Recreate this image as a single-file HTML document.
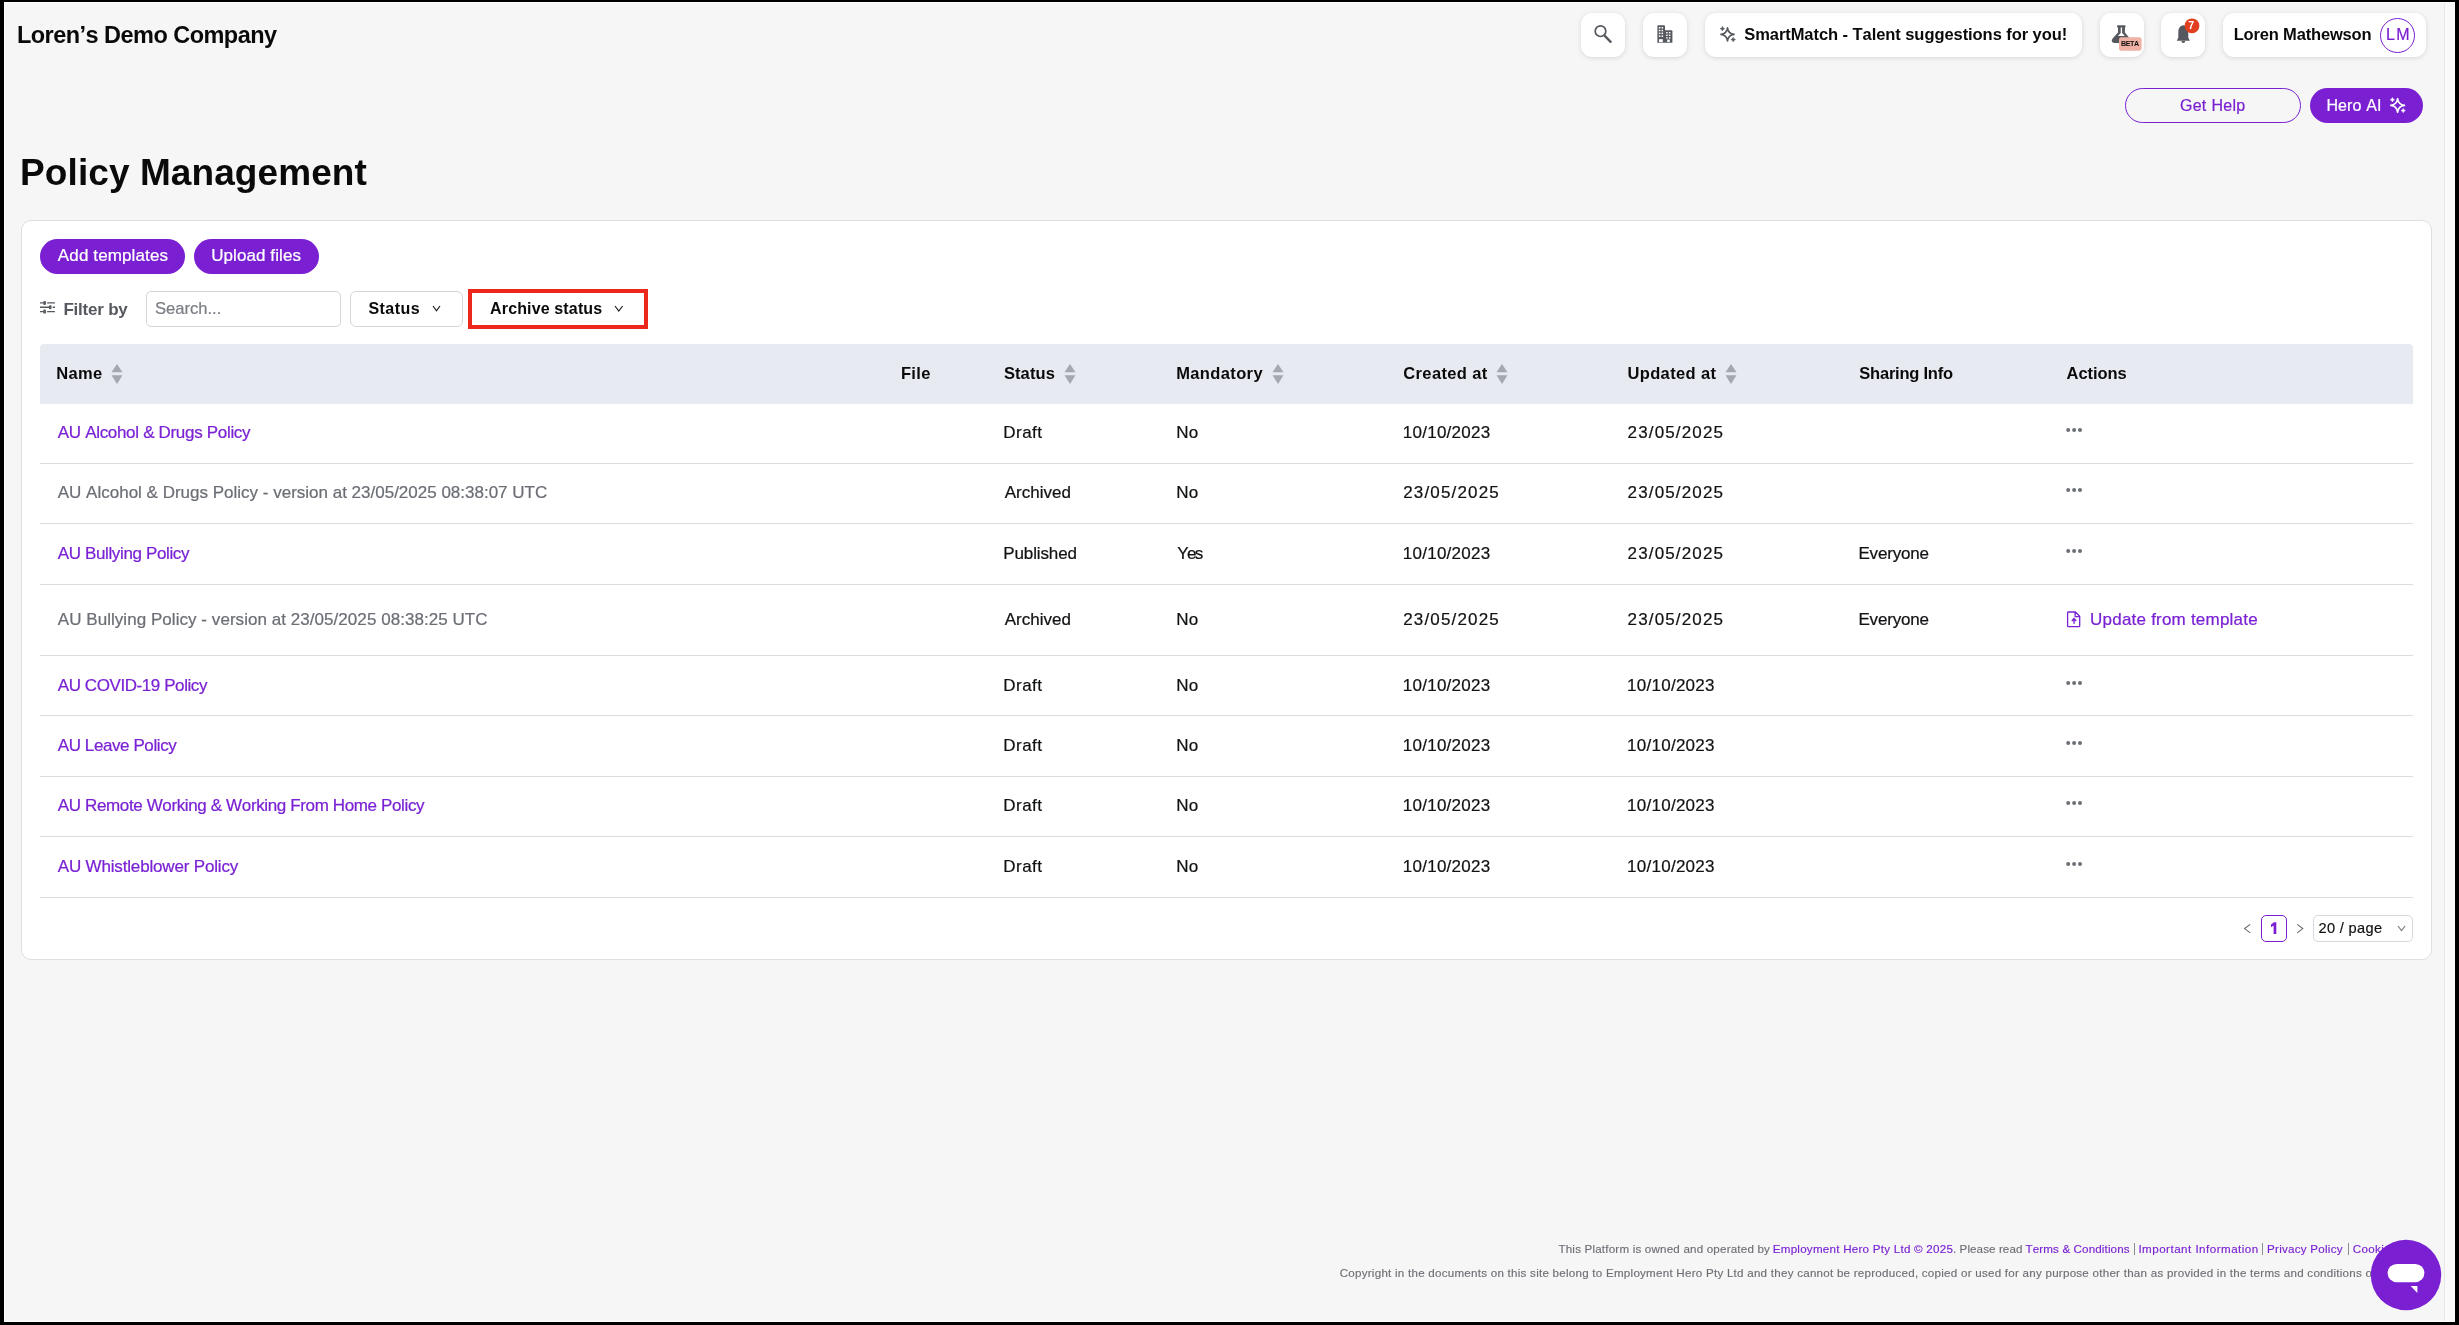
<!DOCTYPE html>
<html><head><meta charset="utf-8"><title>Policy Management</title>
<style>
html,body{margin:0;padding:0;width:2459px;height:1325px;overflow:hidden;background:#f5f5f5}
body{position:relative;font-family:"Liberation Sans",sans-serif}
.t{position:absolute;white-space:nowrap;font-kerning:none}
#root{position:absolute;left:0;top:0;width:2459px;height:1325px;will-change:transform;overflow:hidden}
.ft{position:absolute;white-space:nowrap;font-size:11.6px;line-height:14px;font-kerning:none}
svg{overflow:visible}
</style></head><body><div id="root">
<div style="position:absolute;left:0px;top:0px;width:2459px;height:1325px;background:#000"></div>
<div style="position:absolute;left:4px;top:2px;width:2451px;height:1320px;background:#fff"></div>
<div style="position:absolute;left:5px;top:3px;width:2449px;height:1318px;background:#f6f6f6"></div>
<div style="position:absolute;left:2444px;top:3px;width:10px;height:1318px;background:#fafafa;border-left:1px solid #e8e8e8;box-sizing:border-box"></div>
<span class="t" style="left:16.93px;top:21px;font-size:23.5px;line-height:29px;font-weight:700;color:#0a0a0a;letter-spacing:-0.531px;">Loren’s Demo Company</span>
<div style="position:absolute;left:1581px;top:13px;width:44px;height:44px;background:#fff;border-radius:11px;box-shadow:0 1px 5px rgba(0,0,0,0.13)"></div>
<div style="position:absolute;left:1643px;top:13px;width:44px;height:44px;background:#fff;border-radius:11px;box-shadow:0 1px 5px rgba(0,0,0,0.13)"></div>
<div style="position:absolute;left:1705px;top:13px;width:377px;height:44px;background:#fff;border-radius:11px;box-shadow:0 1px 5px rgba(0,0,0,0.13)"></div>
<div style="position:absolute;left:2100px;top:13px;width:44px;height:44px;background:#fff;border-radius:11px;box-shadow:0 1px 5px rgba(0,0,0,0.13)"></div>
<div style="position:absolute;left:2161px;top:13px;width:44px;height:44px;background:#fff;border-radius:11px;box-shadow:0 1px 5px rgba(0,0,0,0.13)"></div>
<div style="position:absolute;left:2223px;top:13px;width:203px;height:44px;background:#fff;border-radius:11px;box-shadow:0 1px 5px rgba(0,0,0,0.13)"></div>
<svg style="position:absolute;left:1590px;top:20px" width="26" height="28" viewBox="1590 20 26 28"><circle cx="1600.5" cy="31.2" r="5.3" fill="none" stroke="#55585e" stroke-width="1.7"/><line x1="1605" y1="36.2" x2="1610.6" y2="41.8" stroke="#55585e" stroke-width="2.4" stroke-linecap="round"/></svg>
<svg style="position:absolute;left:1650px;top:20px" width="30" height="30" viewBox="1650 20 30 30"><path d="M1657.4 26.3 q0-1 1-1 h5.6 q1 0 1 1 V42.8 h-7.6 Z" fill="#55585e"/><path d="M1665 30.2 h6.4 q1 0 1 1 V42.8 H1665 Z" fill="#55585e"/><rect x="1658.8" y="27" width="1.6" height="1.5" fill="#fff"/><rect x="1658.8" y="29.8" width="1.6" height="1.5" fill="#fff"/><rect x="1658.8" y="32.6" width="1.6" height="1.5" fill="#fff"/><rect x="1658.8" y="35.4" width="1.6" height="1.5" fill="#fff"/><rect x="1661.5" y="27" width="1.6" height="1.5" fill="#fff"/><rect x="1661.5" y="29.8" width="1.6" height="1.5" fill="#fff"/><rect x="1661.5" y="32.6" width="1.6" height="1.5" fill="#fff"/><rect x="1661.5" y="35.4" width="1.6" height="1.5" fill="#fff"/><rect x="1666.2" y="32" width="1.5" height="1.4" fill="#fff"/><rect x="1666.2" y="34.6" width="1.5" height="1.4" fill="#fff"/><rect x="1666.2" y="37.2" width="1.5" height="1.4" fill="#fff"/><rect x="1668.9" y="32" width="1.5" height="1.4" fill="#fff"/><rect x="1668.9" y="34.6" width="1.5" height="1.4" fill="#fff"/><rect x="1668.9" y="37.2" width="1.5" height="1.4" fill="#fff"/><rect x="1659" y="39.2" width="3.8" height="3" fill="#fff"/><rect x="1667.2" y="39.6" width="2.6" height="2.4" fill="#fff"/></svg>
<svg style="position:absolute;left:1715px;top:22px" width="26" height="24" viewBox="1715 22 26 24"><path d="M1727.5 27.799999999999997 Q1728.2 33.699999999999996 1734.1 34.4 Q1728.2 35.1 1727.5 41.0 Q1726.8 35.1 1720.9 34.4 Q1726.8 33.699999999999996 1727.5 27.799999999999997 Z" fill="none" stroke="#55585e" stroke-width="1.6" stroke-linejoin="round"/><path d="M1722.4 26.4 Q1722.8500000000001 28.25 1724.7 28.7 Q1722.8500000000001 29.15 1722.4 31.0 Q1721.95 29.15 1720.1000000000001 28.7 Q1721.95 28.25 1722.4 26.4 Z" fill="#55585e" stroke="#55585e" stroke-width="0.5"/><path d="M1733.2 37.300000000000004 Q1733.65 39.15 1735.5 39.6 Q1733.65 40.050000000000004 1733.2 41.9 Q1732.75 40.050000000000004 1730.9 39.6 Q1732.75 39.15 1733.2 37.300000000000004 Z" fill="#55585e" stroke="#55585e" stroke-width="0.5"/></svg>
<span class="t" style="left:1744.22px;top:24px;font-size:16.5px;line-height:21px;font-weight:700;color:#0a0a0a;letter-spacing:-0.062px;">SmartMatch - Talent suggestions for you!</span>
<svg style="position:absolute;left:2108px;top:20px" width="40" height="34" viewBox="2108 20 40 34"><rect x="2117" y="25.3" width="8.6" height="2.1" rx="0.9" fill="#55585e"/><path fill-rule="evenodd" fill="#55585e" d="M2118 27 V32.6 L2112.6 38.6 Q2111.2 40.3 2112 41.8 Q2112.6 42.9 2114.2 42.9 H2128.6 Q2130.4 42.9 2130.8 41.6 Q2131.2 40.2 2130 38.8 L2124.9 32.6 V27 Z M2120.7 27 V32.9 L2117.9 36.1 H2124.9 L2122.1 32.9 V27 Z"/><rect x="2119" y="37.2" width="22.6" height="13.6" rx="2.2" fill="#f0b2a4"/></svg>
<span class="t" style="left:2121.02px;top:39px;font-size:7.2px;line-height:9px;font-weight:700;color:#111;letter-spacing:-0.476px;">BETA</span>
<svg style="position:absolute;left:2170px;top:15px" width="32" height="32" viewBox="2170 15 32 32"><path d="M2183.3 25.2 C2180.2 25.6 2178.3 28.4 2178.3 31.8 V37.4 L2176.8 40.8 H2189.8 L2188.3 37.4 V31.8 C2188.3 28.4 2186.4 25.6 2183.3 25.2 Z" fill="#55585e"/><path d="M2181.4 41 a1.9 1.9 0 0 0 3.8 0 Z" fill="#55585e"/><circle cx="2192" cy="25.8" r="7.4" fill="#e0401f"/></svg>
<span class="t" style="left:2188.14px;top:19px;font-size:10.6px;line-height:13px;font-weight:700;color:#fff;letter-spacing:0.000px;">7</span>
<span class="t" style="left:2233.70px;top:24px;font-size:16.5px;line-height:21px;font-weight:700;color:#0a0a0a;letter-spacing:-0.167px;">Loren Mathewson</span>
<div style="position:absolute;left:2380px;top:18px;width:35px;height:35px;border:1.4px solid #7a20d2;border-radius:50%;box-sizing:border-box"></div>
<span class="t" style="left:2385.99px;top:25px;font-size:16px;line-height:20px;font-weight:400;color:#7a20d2;letter-spacing:1.298px;-webkit-text-stroke:0.208px #7a20d2;">LM</span>
<div style="position:absolute;left:2125px;top:88px;width:176px;height:35px;border:1.5px solid #7a20d2;border-radius:18px;box-sizing:border-box"></div>
<span class="t" style="left:2179.90px;top:96px;font-size:16px;line-height:20px;font-weight:400;color:#7a20d2;letter-spacing:0.319px;-webkit-text-stroke:0.208px #7a20d2;">Get Help</span>
<div style="position:absolute;left:2310px;top:88px;width:113px;height:35px;background:#7a20d2;border-radius:18px"></div>
<span class="t" style="left:2326.39px;top:96px;font-size:16px;line-height:20px;font-weight:400;color:#fff;letter-spacing:0.141px;-webkit-text-stroke:0.208px #fff;">Hero AI</span>
<svg style="position:absolute;left:2386px;top:94px" width="24" height="24" viewBox="2386 94 24 24"><path d="M2397.6 98.5 Q2398.2999999999997 104.7 2404.5 105.4 Q2398.2999999999997 106.10000000000001 2397.6 112.30000000000001 Q2396.9 106.10000000000001 2390.7 105.4 Q2396.9 104.7 2397.6 98.5 Z" fill="none" stroke="#fff" stroke-width="1.6" stroke-linejoin="round"/><path d="M2392.4 97.6 Q2392.85 99.35 2394.6 99.8 Q2392.85 100.25 2392.4 102.0 Q2391.9500000000003 100.25 2390.2000000000003 99.8 Q2391.9500000000003 99.35 2392.4 97.6 Z" fill="#fff" stroke="#fff" stroke-width="0.5"/><path d="M2403.2 108.39999999999999 Q2403.6499999999996 110.14999999999999 2405.3999999999996 110.6 Q2403.6499999999996 111.05 2403.2 112.8 Q2402.75 111.05 2401.0 110.6 Q2402.75 110.14999999999999 2403.2 108.39999999999999 Z" fill="#fff" stroke="#fff" stroke-width="0.5"/></svg>
<span class="t" style="left:20.12px;top:150px;font-size:37px;line-height:46px;font-weight:700;color:#0a0a0a;letter-spacing:0.081px;">Policy Management</span>
<div style="position:absolute;left:21px;top:220px;width:2411px;height:740px;background:#fff;border:1px solid #dcdfe4;border-radius:10px;box-sizing:border-box"></div>
<div style="position:absolute;left:40px;top:239px;width:145px;height:35px;background:#7a20d2;border-radius:18px"></div>
<span class="t" style="left:57.87px;top:245px;font-size:17px;line-height:21px;font-weight:400;color:#fff;letter-spacing:0.123px;-webkit-text-stroke:0.221px #fff;">Add templates</span>
<div style="position:absolute;left:194px;top:239px;width:125px;height:35px;background:#7a20d2;border-radius:18px"></div>
<span class="t" style="left:211.19px;top:245px;font-size:17px;line-height:21px;font-weight:400;color:#fff;letter-spacing:0.082px;-webkit-text-stroke:0.221px #fff;">Upload files</span>
<svg style="position:absolute;left:38px;top:298px" width="20" height="18" viewBox="38 298 20 18"><path d="M40 302.9 H43.6 M47.1 302.9 H54.9" stroke="#55585e" stroke-width="1.4"/><rect x="43.25" y="300.9" width="2.7" height="4" rx="1.2" fill="#55585e"/><path d="M40 307.3 H49.2 M52.7 307.3 H54.9" stroke="#55585e" stroke-width="1.4"/><rect x="48.85" y="305.3" width="2.7" height="4" rx="1.2" fill="#55585e"/><path d="M40 311.6 H43.6 M47.1 311.6 H54.9" stroke="#55585e" stroke-width="1.4"/><rect x="43.25" y="309.6" width="2.7" height="4" rx="1.2" fill="#55585e"/></svg>
<span class="t" style="left:63.46px;top:299px;font-size:17px;line-height:21px;font-weight:700;color:#55585e;letter-spacing:-0.224px;">Filter by</span>
<div style="position:absolute;left:146px;top:291px;width:195px;height:36px;background:#fff;border:1px solid #d6d6d6;border-radius:5px;box-sizing:border-box"></div>
<span class="t" style="left:155.05px;top:298px;font-size:16.6px;line-height:21px;font-weight:400;color:#7b7e85;letter-spacing:-0.020px;-webkit-text-stroke:0.216px #7b7e85;">Search...</span>
<div style="position:absolute;left:350px;top:291px;width:113px;height:36px;background:#fff;border:1px solid #d6d6d6;border-radius:6px;box-sizing:border-box"></div>
<span class="t" style="left:368.44px;top:299px;font-size:16px;line-height:20px;font-weight:700;color:#0a0a0a;letter-spacing:0.464px;">Status</span>
<svg style="position:absolute;left:430.6px;top:303.9px" width="11.0" height="8.800000000000011" viewBox="430.6 303.9 11.0 8.800000000000011"><path d="M432.6 305.9 L436.1 310.7 L439.6 305.9" fill="none" stroke="#1a1a1a" stroke-width="1.15"/></svg>
<div style="position:absolute;left:472px;top:293px;width:172px;height:32px;background:#fff;border-radius:5px"></div>
<span class="t" style="left:490.10px;top:299px;font-size:16px;line-height:20px;font-weight:700;color:#0a0a0a;letter-spacing:0.138px;">Archive status</span>
<svg style="position:absolute;left:612.8px;top:303.9px" width="11.600000000000023" height="9.100000000000023" viewBox="612.8 303.9 11.600000000000023 9.100000000000023"><path d="M614.8 305.9 L618.5999999999999 311.0 L622.4 305.9" fill="none" stroke="#1a1a1a" stroke-width="1.15"/></svg>
<div style="position:absolute;left:468px;top:289px;width:180px;height:40px;border:4px solid #ec281c;box-sizing:border-box"></div>
<div style="position:absolute;left:40px;top:344px;width:2373px;height:60px;background:#e7eaf1;border-radius:4px 4px 0 0"></div>
<span class="t" style="left:56.30px;top:363px;font-size:16.5px;line-height:21px;font-weight:700;color:#0a0a0a;letter-spacing:0.276px;">Name</span>
<svg style="position:absolute;left:111px;top:363px" width="12" height="22" viewBox="0 0 12 22"><path d="M6 1 L11.5 9.2 H0.5 Z" fill="#a4a7ae"/><path d="M6 21 L11.5 12.3 H0.5 Z" fill="#a4a7ae"/></svg>
<span class="t" style="left:900.90px;top:363px;font-size:16.5px;line-height:21px;font-weight:700;color:#0a0a0a;letter-spacing:0.348px;">File</span>
<span class="t" style="left:1003.92px;top:363px;font-size:16.5px;line-height:21px;font-weight:700;color:#0a0a0a;letter-spacing:0.105px;">Status</span>
<svg style="position:absolute;left:1064px;top:363px" width="12" height="22" viewBox="0 0 12 22"><path d="M6 1 L11.5 9.2 H0.5 Z" fill="#a4a7ae"/><path d="M6 21 L11.5 12.3 H0.5 Z" fill="#a4a7ae"/></svg>
<span class="t" style="left:1176.20px;top:363px;font-size:16.5px;line-height:21px;font-weight:700;color:#0a0a0a;letter-spacing:0.371px;">Mandatory</span>
<svg style="position:absolute;left:1272px;top:363px" width="12" height="22" viewBox="0 0 12 22"><path d="M6 1 L11.5 9.2 H0.5 Z" fill="#a4a7ae"/><path d="M6 21 L11.5 12.3 H0.5 Z" fill="#a4a7ae"/></svg>
<span class="t" style="left:1403.32px;top:363px;font-size:16.5px;line-height:21px;font-weight:700;color:#0a0a0a;letter-spacing:0.354px;">Created at</span>
<svg style="position:absolute;left:1496px;top:363px" width="12" height="22" viewBox="0 0 12 22"><path d="M6 1 L11.5 9.2 H0.5 Z" fill="#a4a7ae"/><path d="M6 21 L11.5 12.3 H0.5 Z" fill="#a4a7ae"/></svg>
<span class="t" style="left:1627.51px;top:363px;font-size:16.5px;line-height:21px;font-weight:700;color:#0a0a0a;letter-spacing:0.349px;">Updated at</span>
<svg style="position:absolute;left:1725px;top:363px" width="12" height="22" viewBox="0 0 12 22"><path d="M6 1 L11.5 9.2 H0.5 Z" fill="#a4a7ae"/><path d="M6 21 L11.5 12.3 H0.5 Z" fill="#a4a7ae"/></svg>
<span class="t" style="left:1859.32px;top:363px;font-size:16.5px;line-height:21px;font-weight:700;color:#0a0a0a;letter-spacing:-0.230px;">Sharing Info</span>
<span class="t" style="left:2066.59px;top:363px;font-size:16.5px;line-height:21px;font-weight:700;color:#0a0a0a;letter-spacing:-0.070px;">Actions</span>
<div style="position:absolute;left:40px;top:463px;width:2373px;height:1px;background:#dbdce0"></div>
<div style="position:absolute;left:40px;top:523px;width:2373px;height:1px;background:#dbdce0"></div>
<div style="position:absolute;left:40px;top:584px;width:2373px;height:1px;background:#dbdce0"></div>
<div style="position:absolute;left:40px;top:655px;width:2373px;height:1px;background:#dbdce0"></div>
<div style="position:absolute;left:40px;top:715px;width:2373px;height:1px;background:#dbdce0"></div>
<div style="position:absolute;left:40px;top:776px;width:2373px;height:1px;background:#dbdce0"></div>
<div style="position:absolute;left:40px;top:836px;width:2373px;height:1px;background:#dbdce0"></div>
<div style="position:absolute;left:40px;top:897px;width:2373px;height:1px;background:#dbdce0"></div>
<span class="t" style="left:57.77px;top:422px;font-size:17px;line-height:21px;font-weight:400;color:#7a22d4;letter-spacing:-0.314px;-webkit-text-stroke:0.221px #7a22d4;">AU Alcohol &amp; Drugs Policy</span>
<span class="t" style="left:1003.31px;top:422px;font-size:17px;line-height:21px;font-weight:400;color:#111214;letter-spacing:0.470px;-webkit-text-stroke:0.221px #111214;">Draft</span>
<span class="t" style="left:1176.31px;top:422px;font-size:17px;line-height:21px;font-weight:400;color:#111214;letter-spacing:0.177px;-webkit-text-stroke:0.221px #111214;">No</span>
<span class="t" style="left:1402.81px;top:422px;font-size:17px;line-height:21px;font-weight:400;color:#111214;letter-spacing:0.251px;-webkit-text-stroke:0.221px #111214;">10/10/2023</span>
<span class="t" style="left:1627.55px;top:422px;font-size:17px;line-height:21px;font-weight:400;color:#111214;letter-spacing:1.154px;-webkit-text-stroke:0.221px #111214;">23/05/2025</span>
<svg style="position:absolute;left:2064px;top:426px" width="22" height="8" viewBox="2064 426 22 8"><circle cx="2068.2" cy="430" r="2" fill="#6c6f75"/><circle cx="2074.1" cy="430" r="2" fill="#6c6f75"/><circle cx="2080" cy="430" r="2" fill="#6c6f75"/></svg>
<span class="t" style="left:57.77px;top:482px;font-size:17px;line-height:21px;font-weight:400;color:#6b6e75;letter-spacing:0.000px;-webkit-text-stroke:0.221px #6b6e75;">AU Alcohol &amp; Drugs Policy - version at 23/05/2025 08:38:07 UTC</span>
<span class="t" style="left:1004.67px;top:482px;font-size:17px;line-height:21px;font-weight:400;color:#111214;letter-spacing:0.027px;-webkit-text-stroke:0.221px #111214;">Archived</span>
<span class="t" style="left:1176.31px;top:482px;font-size:17px;line-height:21px;font-weight:400;color:#111214;letter-spacing:0.177px;-webkit-text-stroke:0.221px #111214;">No</span>
<span class="t" style="left:1403.25px;top:482px;font-size:17px;line-height:21px;font-weight:400;color:#111214;letter-spacing:1.154px;-webkit-text-stroke:0.221px #111214;">23/05/2025</span>
<span class="t" style="left:1627.55px;top:482px;font-size:17px;line-height:21px;font-weight:400;color:#111214;letter-spacing:1.154px;-webkit-text-stroke:0.221px #111214;">23/05/2025</span>
<svg style="position:absolute;left:2064px;top:486px" width="22" height="8" viewBox="2064 486 22 8"><circle cx="2068.2" cy="490" r="2" fill="#6c6f75"/><circle cx="2074.1" cy="490" r="2" fill="#6c6f75"/><circle cx="2080" cy="490" r="2" fill="#6c6f75"/></svg>
<span class="t" style="left:57.77px;top:543px;font-size:17px;line-height:21px;font-weight:400;color:#7a22d4;letter-spacing:-0.369px;-webkit-text-stroke:0.221px #7a22d4;">AU Bullying Policy</span>
<span class="t" style="left:1003.31px;top:543px;font-size:17px;line-height:21px;font-weight:400;color:#111214;letter-spacing:-0.122px;-webkit-text-stroke:0.221px #111214;">Published</span>
<span class="t" style="left:1177.33px;top:543px;font-size:17px;line-height:21px;font-weight:400;color:#111214;letter-spacing:-1.703px;-webkit-text-stroke:0.221px #111214;">Yes</span>
<span class="t" style="left:1402.81px;top:543px;font-size:17px;line-height:21px;font-weight:400;color:#111214;letter-spacing:0.251px;-webkit-text-stroke:0.221px #111214;">10/10/2023</span>
<span class="t" style="left:1627.55px;top:543px;font-size:17px;line-height:21px;font-weight:400;color:#111214;letter-spacing:1.154px;-webkit-text-stroke:0.221px #111214;">23/05/2025</span>
<span class="t" style="left:1858.41px;top:543px;font-size:17px;line-height:21px;font-weight:400;color:#111214;letter-spacing:-0.181px;-webkit-text-stroke:0.221px #111214;">Everyone</span>
<svg style="position:absolute;left:2064px;top:547px" width="22" height="8" viewBox="2064 547 22 8"><circle cx="2068.2" cy="551" r="2" fill="#6c6f75"/><circle cx="2074.1" cy="551" r="2" fill="#6c6f75"/><circle cx="2080" cy="551" r="2" fill="#6c6f75"/></svg>
<span class="t" style="left:57.77px;top:609px;font-size:17px;line-height:21px;font-weight:400;color:#6b6e75;letter-spacing:0.049px;-webkit-text-stroke:0.221px #6b6e75;">AU Bullying Policy - version at 23/05/2025 08:38:25 UTC</span>
<span class="t" style="left:1004.67px;top:609px;font-size:17px;line-height:21px;font-weight:400;color:#111214;letter-spacing:0.027px;-webkit-text-stroke:0.221px #111214;">Archived</span>
<span class="t" style="left:1176.31px;top:609px;font-size:17px;line-height:21px;font-weight:400;color:#111214;letter-spacing:0.177px;-webkit-text-stroke:0.221px #111214;">No</span>
<span class="t" style="left:1403.25px;top:609px;font-size:17px;line-height:21px;font-weight:400;color:#111214;letter-spacing:1.154px;-webkit-text-stroke:0.221px #111214;">23/05/2025</span>
<span class="t" style="left:1627.55px;top:609px;font-size:17px;line-height:21px;font-weight:400;color:#111214;letter-spacing:1.154px;-webkit-text-stroke:0.221px #111214;">23/05/2025</span>
<span class="t" style="left:1858.41px;top:609px;font-size:17px;line-height:21px;font-weight:400;color:#111214;letter-spacing:-0.181px;-webkit-text-stroke:0.221px #111214;">Everyone</span>
<svg style="position:absolute;left:2066px;top:610px" width="16" height="18" viewBox="2066 610 16 18"><path d="M2068.4 612 h7 l4.3 4.3 v9.6 q0 0.8 -0.8 0.8 h-10.5 q-0.8 0 -0.8 -0.8 v-13.1 q0 -0.8 0.8 -0.8 Z M2075.1 612.2 v4.4 h4.4" fill="none" stroke="#7a22d4" stroke-width="1.3" stroke-linejoin="round"/><path d="M2074 623.8 v-5 M2071.8 620.9 l2.2 -2.3 l2.2 2.3" fill="none" stroke="#7a22d4" stroke-width="1.4"/></svg>
<span class="t" style="left:2090.09px;top:609px;font-size:17px;line-height:21px;font-weight:400;color:#7a22d4;letter-spacing:0.216px;-webkit-text-stroke:0.221px #7a22d4;">Update from template</span>
<span class="t" style="left:57.77px;top:675px;font-size:17px;line-height:21px;font-weight:400;color:#7a22d4;letter-spacing:-0.421px;-webkit-text-stroke:0.221px #7a22d4;">AU COVID-19 Policy</span>
<span class="t" style="left:1003.31px;top:675px;font-size:17px;line-height:21px;font-weight:400;color:#111214;letter-spacing:0.470px;-webkit-text-stroke:0.221px #111214;">Draft</span>
<span class="t" style="left:1176.31px;top:675px;font-size:17px;line-height:21px;font-weight:400;color:#111214;letter-spacing:0.177px;-webkit-text-stroke:0.221px #111214;">No</span>
<span class="t" style="left:1402.81px;top:675px;font-size:17px;line-height:21px;font-weight:400;color:#111214;letter-spacing:0.251px;-webkit-text-stroke:0.221px #111214;">10/10/2023</span>
<span class="t" style="left:1627.11px;top:675px;font-size:17px;line-height:21px;font-weight:400;color:#111214;letter-spacing:0.251px;-webkit-text-stroke:0.221px #111214;">10/10/2023</span>
<svg style="position:absolute;left:2064px;top:679px" width="22" height="8" viewBox="2064 679 22 8"><circle cx="2068.2" cy="683" r="2" fill="#6c6f75"/><circle cx="2074.1" cy="683" r="2" fill="#6c6f75"/><circle cx="2080" cy="683" r="2" fill="#6c6f75"/></svg>
<span class="t" style="left:57.77px;top:735px;font-size:17px;line-height:21px;font-weight:400;color:#7a22d4;letter-spacing:-0.412px;-webkit-text-stroke:0.221px #7a22d4;">AU Leave Policy</span>
<span class="t" style="left:1003.31px;top:735px;font-size:17px;line-height:21px;font-weight:400;color:#111214;letter-spacing:0.470px;-webkit-text-stroke:0.221px #111214;">Draft</span>
<span class="t" style="left:1176.31px;top:735px;font-size:17px;line-height:21px;font-weight:400;color:#111214;letter-spacing:0.177px;-webkit-text-stroke:0.221px #111214;">No</span>
<span class="t" style="left:1402.81px;top:735px;font-size:17px;line-height:21px;font-weight:400;color:#111214;letter-spacing:0.251px;-webkit-text-stroke:0.221px #111214;">10/10/2023</span>
<span class="t" style="left:1627.11px;top:735px;font-size:17px;line-height:21px;font-weight:400;color:#111214;letter-spacing:0.251px;-webkit-text-stroke:0.221px #111214;">10/10/2023</span>
<svg style="position:absolute;left:2064px;top:739px" width="22" height="8" viewBox="2064 739 22 8"><circle cx="2068.2" cy="743" r="2" fill="#6c6f75"/><circle cx="2074.1" cy="743" r="2" fill="#6c6f75"/><circle cx="2080" cy="743" r="2" fill="#6c6f75"/></svg>
<span class="t" style="left:57.77px;top:795px;font-size:17px;line-height:21px;font-weight:400;color:#7a22d4;letter-spacing:-0.368px;-webkit-text-stroke:0.221px #7a22d4;">AU Remote Working &amp; Working From Home Policy</span>
<span class="t" style="left:1003.31px;top:795px;font-size:17px;line-height:21px;font-weight:400;color:#111214;letter-spacing:0.470px;-webkit-text-stroke:0.221px #111214;">Draft</span>
<span class="t" style="left:1176.31px;top:795px;font-size:17px;line-height:21px;font-weight:400;color:#111214;letter-spacing:0.177px;-webkit-text-stroke:0.221px #111214;">No</span>
<span class="t" style="left:1402.81px;top:795px;font-size:17px;line-height:21px;font-weight:400;color:#111214;letter-spacing:0.251px;-webkit-text-stroke:0.221px #111214;">10/10/2023</span>
<span class="t" style="left:1627.11px;top:795px;font-size:17px;line-height:21px;font-weight:400;color:#111214;letter-spacing:0.251px;-webkit-text-stroke:0.221px #111214;">10/10/2023</span>
<svg style="position:absolute;left:2064px;top:799px" width="22" height="8" viewBox="2064 799 22 8"><circle cx="2068.2" cy="803" r="2" fill="#6c6f75"/><circle cx="2074.1" cy="803" r="2" fill="#6c6f75"/><circle cx="2080" cy="803" r="2" fill="#6c6f75"/></svg>
<span class="t" style="left:57.77px;top:856px;font-size:17px;line-height:21px;font-weight:400;color:#7a22d4;letter-spacing:-0.171px;-webkit-text-stroke:0.221px #7a22d4;">AU Whistleblower Policy</span>
<span class="t" style="left:1003.31px;top:856px;font-size:17px;line-height:21px;font-weight:400;color:#111214;letter-spacing:0.470px;-webkit-text-stroke:0.221px #111214;">Draft</span>
<span class="t" style="left:1176.31px;top:856px;font-size:17px;line-height:21px;font-weight:400;color:#111214;letter-spacing:0.177px;-webkit-text-stroke:0.221px #111214;">No</span>
<span class="t" style="left:1402.81px;top:856px;font-size:17px;line-height:21px;font-weight:400;color:#111214;letter-spacing:0.251px;-webkit-text-stroke:0.221px #111214;">10/10/2023</span>
<span class="t" style="left:1627.11px;top:856px;font-size:17px;line-height:21px;font-weight:400;color:#111214;letter-spacing:0.251px;-webkit-text-stroke:0.221px #111214;">10/10/2023</span>
<svg style="position:absolute;left:2064px;top:860px" width="22" height="8" viewBox="2064 860 22 8"><circle cx="2068.2" cy="864" r="2" fill="#6c6f75"/><circle cx="2074.1" cy="864" r="2" fill="#6c6f75"/><circle cx="2080" cy="864" r="2" fill="#6c6f75"/></svg>
<svg style="position:absolute;left:2240px;top:922px" width="14" height="14" viewBox="2240 922 14 14"><path d="M2250.2 924.4 L2244.6 928.6 L2250.2 932.8" fill="none" stroke="#666" stroke-width="1.05"/></svg>
<div style="position:absolute;left:2261px;top:915px;width:26px;height:27px;border:1.5px solid #7a20d2;border-radius:5px;box-sizing:border-box"></div>
<svg style="position:absolute;left:2266px;top:918px" width="16" height="20" viewBox="2266 918 16 20"><path d="M2273.6 934 V925.6 L2271 927.3 V924.6 L2274 922.2 H2276.3 V934 Z" fill="#7a20d2"/></svg>
<svg style="position:absolute;left:2294px;top:922px" width="12" height="14" viewBox="2294 922 12 14"><path d="M2297.2 924.4 L2302.8 928.6 L2297.2 932.8" fill="none" stroke="#666" stroke-width="1.05"/></svg>
<div style="position:absolute;left:2313px;top:915px;width:100px;height:27px;border:1px solid #d5d8de;border-radius:5px;box-sizing:border-box;background:#fff"></div>
<span class="t" style="left:2318.57px;top:919px;font-size:14.6px;line-height:18px;font-weight:400;color:#111;letter-spacing:0.324px;-webkit-text-stroke:0.190px #111;">20 / page</span>
<svg style="position:absolute;left:2395.7px;top:924.3px" width="11.100000000000364" height="8.700000000000045" viewBox="2395.7 924.3 11.100000000000364 8.700000000000045"><path d="M2397.7 926.3 L2401.25 931 L2404.8 926.3" fill="none" stroke="#777" stroke-width="1.1"/></svg>
<span class="t" style="left:1558.44px;top:1242px;font-size:11.6px;line-height:14px;font-weight:400;color:#6d6f75;letter-spacing:0.194px;-webkit-text-stroke:0.151px #6d6f75;">This Platform is owned and operated by</span>
<span class="t" style="left:1772.75px;top:1242px;font-size:11.6px;line-height:14px;font-weight:400;color:#7a22d4;letter-spacing:0.251px;-webkit-text-stroke:0.151px #7a22d4;">Employment Hero Pty Ltd © 2025</span>
<span class="t" style="left:1952.94px;top:1242px;font-size:11.6px;line-height:14px;font-weight:400;color:#6d6f75;letter-spacing:0.096px;-webkit-text-stroke:0.151px #6d6f75;">. Please read</span>
<span class="t" style="left:2025.54px;top:1242px;font-size:11.6px;line-height:14px;font-weight:400;color:#7a22d4;letter-spacing:0.131px;-webkit-text-stroke:0.151px #7a22d4;">Terms &amp; Conditions</span>
<span class="t" style="left:2138.43px;top:1242px;font-size:11.6px;line-height:14px;font-weight:400;color:#7a22d4;letter-spacing:0.479px;-webkit-text-stroke:0.151px #7a22d4;">Important Information</span>
<span class="t" style="left:2267.05px;top:1242px;font-size:11.6px;line-height:14px;font-weight:400;color:#7a22d4;letter-spacing:0.252px;-webkit-text-stroke:0.151px #7a22d4;">Privacy Policy</span>
<span class="t" style="left:2352.71px;top:1242px;font-size:11.6px;line-height:14px;font-weight:400;color:#7a22d4;letter-spacing:0.361px;-webkit-text-stroke:0.151px #7a22d4;">Cookie Policy</span>
<div style="position:absolute;left:2134.0px;top:1242.5px;width:1px;height:12.5px;background:#8a8c90"></div>
<div style="position:absolute;left:2262.3px;top:1242.5px;width:1px;height:12.5px;background:#8a8c90"></div>
<div style="position:absolute;left:2347.8px;top:1242.5px;width:1px;height:12.5px;background:#8a8c90"></div>
<span class="t" style="left:1339.71px;top:1266px;font-size:11.6px;line-height:14px;font-weight:400;color:#6d6f75;letter-spacing:0.247px;-webkit-text-stroke:0.151px #6d6f75;">Copyright in the documents on this site belong to Employment Hero Pty Ltd and they cannot be reproduced, copied or used for any purpose other than as provided in the terms and conditions of use.</span>
<svg style="position:absolute;left:2370px;top:1239px" width="72" height="72" viewBox="2370 1239 72 72"><circle cx="2406" cy="1275" r="35.2" fill="#7a20d2"/><rect x="2387.6" y="1263.9" width="36.8" height="18.4" rx="9.2" fill="#fff"/><path d="M2410.6 1286 L2417.4 1286 L2417.4 1293 Z" fill="#fff"/></svg>
</div></body></html>
